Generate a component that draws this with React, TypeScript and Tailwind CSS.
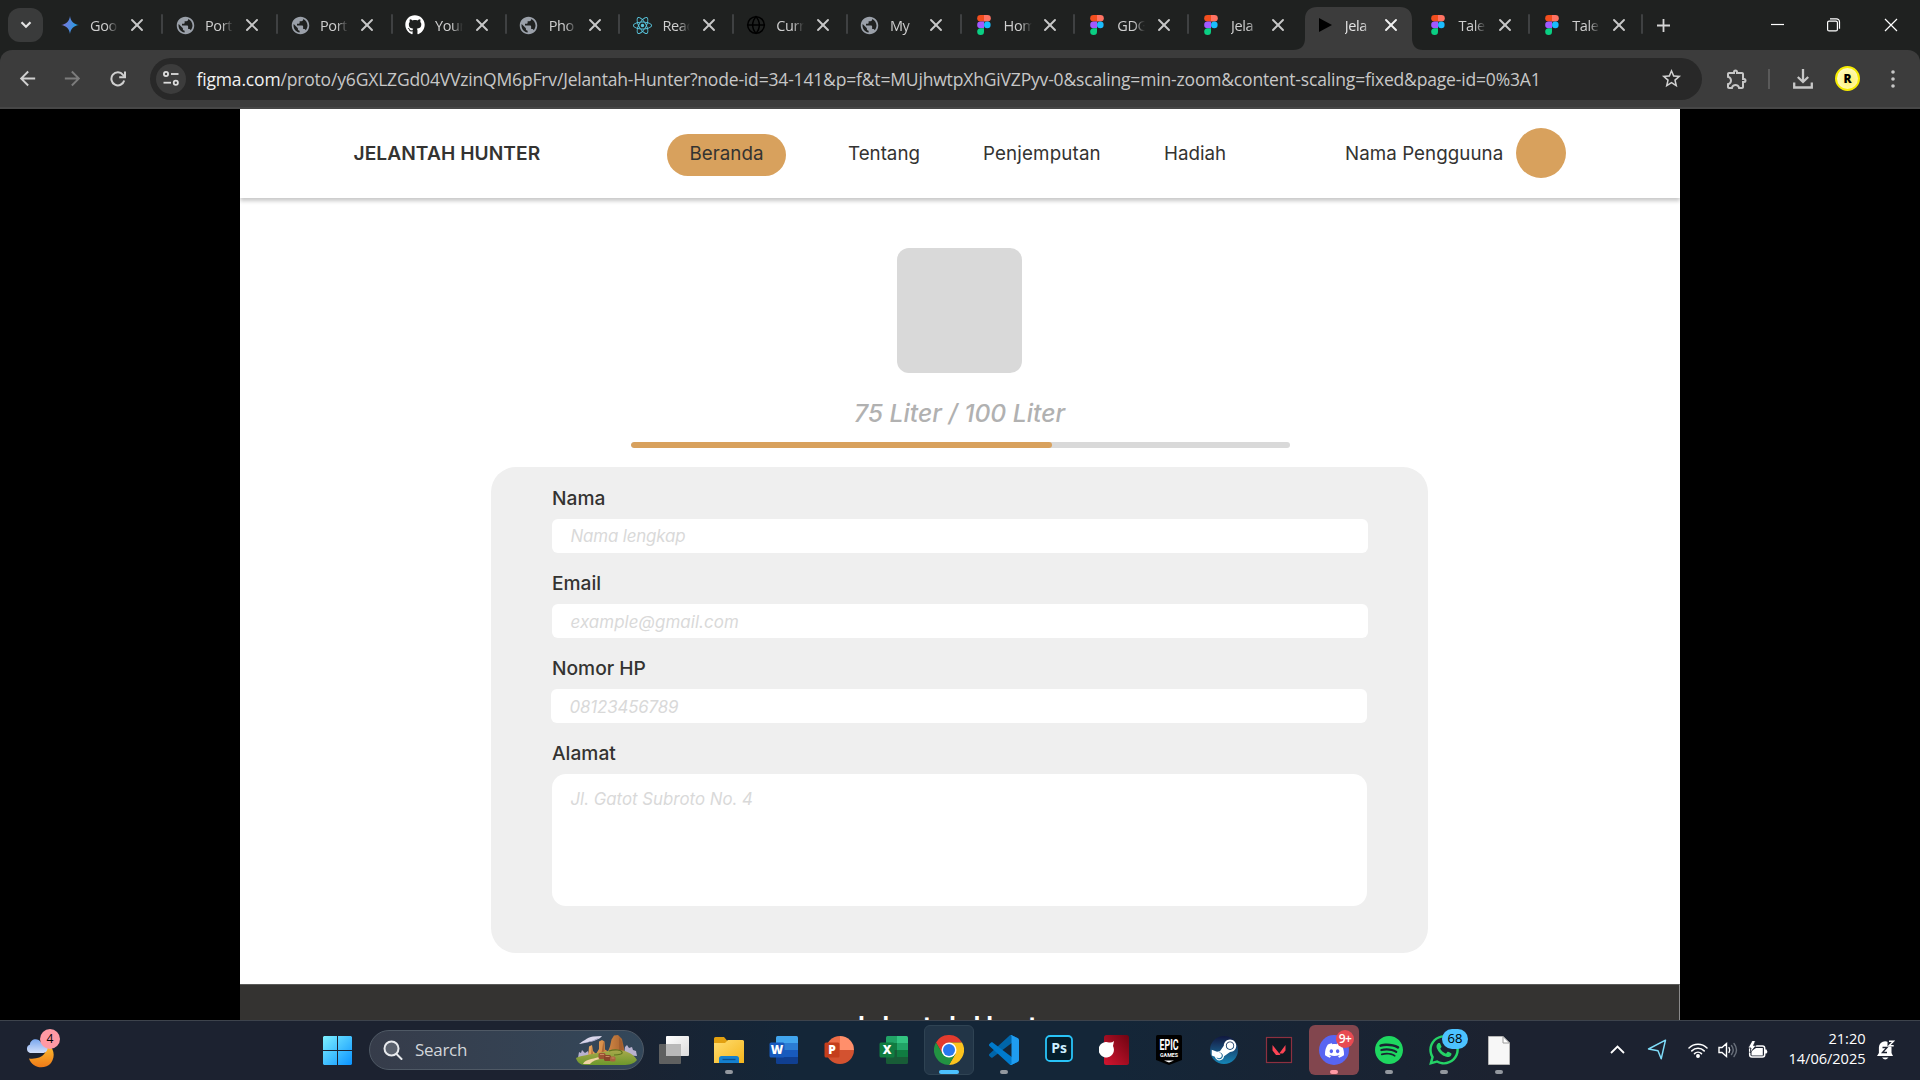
import React from "react";
import { MdArrowBack, MdArrowForward, MdOutlineExtension, MdPublic, MdStarOutline } from "react-icons/md";
import { FaGithub, FaWhatsapp, FaSteamSymbol } from "react-icons/fa";
import { SiReact, SiDiscord, SiSpotify } from "react-icons/si";
import { Globe, X } from "lucide-react";

/* ---------- favicons ---------- */

function FigmaMark() {
  return (
    <svg width="14" height="20" viewBox="0 0 14 20">
      <path d="M3.5 0H7v6.6H3.5a3.3 3.3 0 0 1 0-6.6z" fill="#f24e1e" />
      <path d="M7 0h3.5a3.3 3.3 0 0 1 0 6.6H7z" fill="#ff7262" />
      <path d="M3.5 6.6H7v6.6H3.5a3.3 3.3 0 0 1 0-6.6z" fill="#a259ff" />
      <circle cx="10.3" cy="9.9" r="3.3" fill="#1abcfe" />
      <path d="M3.5 13.2H7v3.3a3.4 3.4 0 1 1-3.5-3.3z" fill="#0acf83" />
    </svg>
  );
}

function Sparkle() {
  return (
    <svg width="18" height="18" viewBox="0 0 18 18">
      <defs>
        <linearGradient id="spark" x1="0" y1="0" x2="1" y2="0.2">
          <stop offset="0" stopColor="#8a6fd0" />
          <stop offset="0.5" stopColor="#5a86e0" />
          <stop offset="1" stopColor="#1ba1e3" />
        </linearGradient>
      </defs>
      <path d="M9 0c.5 5 4 8.500 9 9-5 .5-8.500 4-9 9-.5-5-4-8.500-9-9 5-.5 8.500-4 9-9z" fill="url(#spark)" />
    </svg>
  );
}

function PlayMark() {
  return (
    <svg width="18" height="18" viewBox="0 0 18 18">
      <path d="M3 2l13 7-13 7z" fill="#000" />
    </svg>
  );
}

const chromeGlobe = <MdPublic size={21} color="#9aa0a9" />;

type Tab = { label: string; icon: React.ReactNode; wide?: boolean; active?: boolean; sep?: boolean };

const tabs: Tab[] = [
  { label: "Goo", icon: <Sparkle />, wide: true },
  { label: "Port", icon: chromeGlobe, wide: true, sep: true },
  { label: "Port", icon: chromeGlobe, wide: true, sep: true },
  { label: "Your", icon: <FaGithub size={20} color="#fff" />, sep: true },
  { label: "Pho", icon: chromeGlobe, sep: true },
  { label: "Reac", icon: <SiReact size={19} color="#58c4dc" />, sep: true },
  { label: "Curr", icon: <Globe size={20} color="#000" strokeWidth={1.8} />, sep: true },
  { label: "My", icon: chromeGlobe, sep: true },
  { label: "Hom", icon: <FigmaMark />, sep: true },
  { label: "GDG", icon: <FigmaMark />, sep: true },
  { label: "Jela", icon: <FigmaMark />, sep: true },
  { label: "Jela", icon: <PlayMark />, active: true },
  { label: "Tale", icon: <FigmaMark /> },
  { label: "Tale", icon: <FigmaMark />, sep: true },
];

function TabItem({ tab }: { tab: Tab }) {
  return (
    <div className={`relative flex h-[50px] items-center ${tab.wide ? "w-[115px]" : "w-[113.730px]"}`}>
      {tab.active && (
        <svg className="absolute -left-2 bottom-0" width="130" height="43" viewBox="0 0 130 43">
          <path d="M0 43c8 0 12-4 12-12V12C12 4 17 0 24 0h83c7 0 12 4 12 12v19c0 8 4 12 11 12z" fill="#3c3c3c" />
        </svg>
      )}
      {tab.sep && <div className="absolute left-0 top-[14px] h-5 w-[2px] rounded bg-[#3f4142]" />}
      <div className="relative ml-[13px] flex w-[22px] justify-center">{tab.icon}</div>
      <div
        className={`relative ml-[9px] w-[28px] overflow-hidden whitespace-nowrap pt-px text-[14.500px] leading-5 tracking-[-0.400px] [mask-image:linear-gradient(to_right,black_60%,transparent)] ${
          tab.active ? "text-[#e3e3e3]" : "text-[#cfcfcf]"
        }`}
      >
        {tab.label}
      </div>
      <X className="relative ml-[8.500px]" size={20} strokeWidth={2.3} color={tab.active ? "#f0f0f0" : "#c7c7c7"} />
    </div>
  );
}

function TabStrip() {
  return (
    <div className="flex h-[50px] bg-[#1f2120]">
      <div className="mt-[8px] ml-[8px] mr-[3px] flex h-[34px] w-[35px] items-center justify-center rounded-xl bg-[#3a3b3b]">
        <svg width="12" height="8" viewBox="0 0 12 8" fill="none" stroke="#e3e3e3" strokeWidth="2.2">
          <path d="M1.500 1.200L6 5.700l4.500-4.500" />
        </svg>
      </div>
      {tabs.map((t, i) => (
        <TabItem key={i} tab={t} />
      ))}
      <div className="relative w-[42px]">
        <div className="absolute left-[-1px] top-[14px] h-5 w-[2px] rounded bg-[#3f4142]" />
        <svg className="mt-[19px] ml-[15px]" width="13" height="13" viewBox="0 0 13 13" stroke="#d5d5d5" strokeWidth="1.800">
          <path d="M6.500 0v13M0 6.500h13" />
        </svg>
      </div>
      <div className="ml-auto flex h-[50px] items-center pr-[22px]">
        <svg width="127" height="14" viewBox="0 0 127 14" fill="none" stroke="#fff" strokeWidth="1.200">
          <path d="M0 6.500h13" />
          <rect x="56.600" y="3.100" width="9.800" height="9.800" rx="1.500" />
          <path d="M59 .8h6.500a3 3 0 0 1 3 3v7" />
          <path d="M114 1l12 12M126 1l-12 12" />
        </svg>
      </div>
    </div>
  );
}

/* ---------- toolbar ---------- */

function Cell({ children }: { children: React.ReactNode }) {
  return <div className="flex w-[45px] justify-center">{children}</div>;
}

function Toolbar() {
  return (
    <div className="h-[59px] bg-[#1f2120]">
      <div className="flex h-[59px] items-center rounded-t-xl border-b-2 border-[#474747] bg-[#3c3c3c] pl-[5px]">
        <Cell><MdArrowBack size={23} color="#d0d0d0" /></Cell>
        <Cell><MdArrowForward size={23} color="#7c7c7c" /></Cell>
        <Cell>
          <svg width="16" height="16" viewBox="0 0 16 16" fill="none" stroke="#d0d0d0" strokeWidth="2">
            <path d="M14.200 9.500A6.500 6.500 0 1 1 13 3.800l1.800 2" />
            <path d="M15 .5v5.800H9.200" />
          </svg>
        </Cell>
        <div className="ml-[10px] flex h-[42px] w-[1552px] items-center rounded-full bg-[#282828] pl-[6px] pr-[19px]">
          <div className="flex size-[30px] items-center justify-center rounded-full bg-[#3c3c3c]">
            <svg width="16" height="15" viewBox="0 0 16 15" fill="none" stroke="#dcdcdc" strokeWidth="1.800">
              <circle cx="3" cy="3" r="2.100" />
              <path d="M8 3h7.500" />
              <circle cx="12.800" cy="11.700" r="2.100" />
              <path d="M.5 11.700H8" />
            </svg>
          </div>
          <div className="ml-[10.500px] whitespace-nowrap pt-px text-[17.500px] leading-6 tracking-[-0.170px] text-[#c7c7c7]">
            <span className="text-[#f1f1f1]">figma.com</span>
            /proto/y6GXLZGd04VVzinQM6pFrv/Jelantah-Hunter?node-id=34-141&amp;p=f&amp;t=MUjhwtpXhGiVZPyv-0&amp;scaling=min-zoom&amp;content-scaling=fixed&amp;page-id=0%3A1
          </div>
          <MdStarOutline className="ml-auto" size={23} color="#d0d0d0" />
        </div>
        <div className="ml-[12px]"><Cell><MdOutlineExtension size={24} color="#c7c7c7" /></Cell></div>
        <div className="mr-[10px] ml-[9px] h-5 w-[2px] bg-[#5a5a5a]" />
        <Cell>
          <svg width="20" height="20" viewBox="0 0 20 20" fill="none" stroke="#c7c7c7" strokeWidth="2.300">
            <path d="M10 0v13M4.800 8L10 13l5.200-5M1.200 13.500V18.500h17.600V13.500" />
          </svg>
        </Cell>
        <Cell>
          <div className="flex size-[25px] items-center justify-center rounded-full border-2 border-[#f7ec00] bg-[radial-gradient(circle_at_60%_60%,#fff36b,#fffde0)] text-[12px] font-extrabold text-black">R</div>
        </Cell>
        <Cell>
          <svg width="4" height="18" viewBox="0 0 4 18" fill="#c7c7c7">
            <circle cx="2" cy="2" r="1.800" /><circle cx="2" cy="9" r="1.800" /><circle cx="2" cy="16" r="1.800" />
          </svg>
        </Cell>
      </div>
    </div>
  );
}

/* ---------- web page ---------- */

function Navbar() {
  return (
    <nav className="relative flex h-[89px] shrink-0 items-center bg-white pb-px text-[18.750px] leading-6 text-[#343331] shadow-[0_3px_4px_rgba(0,0,0,0.22)]">
      <div className="ml-[113.500px] w-[313.500px] text-[19.200px] font-semibold tracking-[0.050px]">JELANTAH HUNTER</div>
      <div className="flex h-[42px] mt-[3px] w-[119px] items-center justify-center rounded-[21px] bg-[#d8a15d] pb-px">Beranda</div>
      <div className="ml-[62px] w-[135px] pt-[2px]">Tentang</div>
      <div className="w-[181px] pt-[2px] tracking-[0.150px]">Penjemputan</div>
      <div className="w-[181px] pt-[2px]">Hadiah</div>
      <div className="w-[171px] pt-[2px] tracking-[0.050px]">Nama Pengguuna</div>
      <div className="size-[50px] rounded-full bg-[#d8a15d]" />
    </nav>
  );
}

const label = "h-[30px] text-[19.200px] font-medium leading-[29px] text-[#343331]";
const field = "mt-[5px] mb-4 flex h-[34px] w-[816px] items-center rounded-md bg-white pl-[18.500px] text-[16.900px] italic text-[#d9d9d9]";

function ProfileForm() {
  return (
    <div className="mt-[19px] h-[486px] w-[937px] rounded-[25px] bg-[#efefef] pt-[17px] pl-[61px]">
      <div className={label}>Nama</div>
      <div className={`${field} pt-px tracking-[-0.150px]`}>Nama lengkap</div>
      <div className={label}>Email</div>
      <div className={`${field} pt-[3px] tracking-[0.080px]`}>example@gmail.com</div>
      <div className={label}>Nomor HP</div>
      <div className={`${field} -ml-px pt-[3px] tracking-[-0.150px]`}>08123456789</div>
      <div className={label}>Alamat</div>
      <div className="mt-[5px] h-[132px] w-[815px] rounded-[14px] bg-white pt-[13px] pl-[18.500px] text-[16.800px] italic leading-6 tracking-[0.020px] text-[#d9d9d9]">
        Jl. Gatot Subroto No. 4
      </div>
    </div>
  );
}

function Page() {
  return (
    <div className="flex h-[911px] justify-center bg-black">
      <div className="flex w-[1440px] flex-col overflow-hidden bg-white font-['Inter',sans-serif]">
        <Navbar />
        <main className="flex h-[786px] flex-col items-center pt-[50px] pr-px">
          <div className="size-[125px] rounded-xl bg-[#d9d9d9]" />
          <div className="mt-5 h-10 text-[24.700px] font-medium italic leading-10 text-[#b1b1b1]">75 Liter / 100 Liter</div>
          <div className="mt-[9px] ml-[2px] h-[6px] w-[659px] overflow-hidden rounded-full bg-[#d9d9d9]">
            <div className="h-full w-[421px] rounded-full bg-[#d8a15d]" />
          </div>
          <ProfileForm />
        </main>
        <footer className="h-9 border-t border-r border-t-[#5a5a58] border-r-[#8a8a8a] bg-[#343331] pt-[27px] pr-1 text-center text-[27px] font-semibold leading-[30px] tracking-[0.500px] text-white">
          Jelantah Hunter
        </footer>
      </div>
    </div>
  );
}

/* ---------- taskbar ---------- */

function Weather() {
  return (
    <div className="relative ml-[26px] mt-[12px] h-[44px] w-[284px]">
      <svg width="36" height="44" viewBox="0 0 36 44">
        <defs>
          <linearGradient id="moon" x1="0" y1="0" x2="0" y2="1">
            <stop offset="0" stopColor="#ffc531" /><stop offset="1" stopColor="#ee7a18" />
          </linearGradient>
          <linearGradient id="cloud" x1="0" y1="0" x2="0" y2="1">
            <stop offset="0" stopColor="#7aa7ee" /><stop offset="1" stopColor="#d3e0fb" />
          </linearGradient>
        </defs>
        <path d="M20 10c3 9-4 17-17 15.500 3 10 16 11.500 22 4.500 5-7 3-16-5-20z" fill="url(#moon)" />
        <path d="M4 20a4.500 4.500 0 0 1 0-8.500c0-5.500 8-7.500 11-2 6-1 8 4 6 8-1 2-3 2.500-5 2.500z" fill="url(#cloud)" />
      </svg>
      <div className="absolute left-[14px] top-[-4px] flex size-5 items-center justify-center rounded-full bg-[#ff99a4] text-[12px] text-black">4</div>
    </div>
  );
}

function WindowsLogo() {
  return (
    <svg width="29" height="29" viewBox="0 0 29 29">
      <defs>
        <linearGradient id="win" gradientUnits="userSpaceOnUse" x1="0" y1="0" x2="29" y2="29">
          <stop offset="0" stopColor="#7df0ff" /><stop offset="1" stopColor="#0a93ff" />
        </linearGradient>
      </defs>
      <path d="M1 0h13v14H0V1zM15 0h13l1 1v13H15zM0 15h14v14H1l-1-1zM15 15h14v13l-1 1H15z" fill="url(#win)" />
    </svg>
  );
}

function SearchArt() {
  return (
    <svg width="62" height="32" viewBox="0 0 62 32">
      <defs>
        <linearGradient id="rock" x1="0" y1="0" x2="1" y2="0">
          <stop offset="0" stopColor="#e9a862" /><stop offset="0.5" stopColor="#d58a45" /><stop offset="1" stopColor="#a4602f" />
        </linearGradient>
        <linearGradient id="grass" x1="0" y1="0" x2="0" y2="1">
          <stop offset="0" stopColor="#a9a94b" /><stop offset="1" stopColor="#6c982c" />
        </linearGradient>
      </defs>
      <path d="M3 10c2-1 3-3 6-4 2-2 5-3 8-3.500L26 2c-1 2-4 3-6 4-3 2-6 1-9 2.500-3 .5-5 1-8 1.500z" fill="#d9d6ea" />
      <path d="M5 9.500c4-1.500 8-1 12-3l6-3c-3 3-6 3.500-9 4.500z" fill="#8f8fb8" />
      <path d="M2 24l1-6 2 1 1-3 3 3 3-2 2 7z" fill="#b9b2cf" />
      <path d="M48 21l1-8 2-2 2 3 3-1 1 3 3 1 1 5z" fill="#b9b2cf" />
      <path d="M11 25l1.500-6 .5-6.500 3-1.500 1 6 3 3 3-5V7.500L26 6l2.500 1.500.5 8 3 2 2-5 1.500-7L38 1.500 42 1l4 4 2 9 1 9z" fill="url(#rock)" />
      <path d="M16 12l1 9-2 1zM27.500 7l1 10-3 2zM43 3l3 5 1 10-4-1z" fill="#9c5a2e" opacity="0.700" />
      <path d="M0 24c6-3 13-3 20-5 8 0 12-3 20-3 9 0 17 3 21 10-3 4-8 5-14 5H9c-5 0-8-3-9-7z" fill="url(#grass)" />
      <path d="M33 17c6-2 12-1 13 1s-3 3-8 3" fill="none" stroke="#5f7420" strokeWidth="1.200" />
      <path d="M7 30c1-4 9-5 16-7l1 2c-6 1-8 3-10 5z" fill="#f0d3a3" />
      <rect x="22.500" y="19" width="7" height="6" rx="1.500" fill="#9c5433" />
      <rect x="28" y="21" width="7" height="6" rx="1.500" fill="#8a4529" />
      <rect x="34" y="22.500" width="5.500" height="5" rx="1.500" fill="#a9623d" />
      <path d="M24 20.500h4M29.500 22.500h4M35.500 24h3" stroke="#c98a63" strokeWidth="1" />
    </svg>
  );
}

function SearchBox() {
  return (
    <div className="ml-1 flex h-[40px] w-[275px] items-center rounded-full border border-[#4f5965] bg-gradient-to-r from-[#363c4a] to-[#33475a] pl-[13px] pr-[5px]">
      <svg width="20" height="20" viewBox="0 0 20 20" fill="none" stroke="#e8eaed" strokeWidth="2" strokeLinecap="round">
        <circle cx="8.500" cy="8.500" r="7" fill="#5a616d" /><path d="M13.500 14l5 5" />
      </svg>
      <div className="ml-[12px] text-[17px] leading-6 tracking-[-0.300px] text-[#d3d6da]">Search</div>
      <div className="ml-auto"><SearchArt /></div>
    </div>
  );
}

function OfficeTile({ letter, dark, children }: { letter: string; dark: string; children: React.ReactNode }) {
  return (
    <svg width="30" height="30" viewBox="0 0 30 30">
      {children}
      <rect x="0.500" y="7.500" width="15" height="15" rx="1.500" fill={dark} />
      <text x="8" y="19.200" textAnchor="middle" fontSize="12" fontWeight="800" fill="#fff" fontFamily="Open Sans">{letter}</text>
    </svg>
  );
}

type App = { icon: React.ReactNode; run?: "idle" | "active" | "alert"; badge?: React.ReactNode };

const apps: App[] = [
  {
    icon: (
      <svg width="30" height="30" viewBox="0 0 30 30">
        <defs>
          <linearGradient id="tv" x1="0" y1="0" x2="1" y2="1"><stop offset="0" stopColor="#fff" /><stop offset="1" stopColor="#dcdcdc" /></linearGradient>
        </defs>
        <rect x="7" y="1" width="23" height="20" rx="1" fill="url(#tv)" />
        <rect x="0" y="9" width="22" height="20" rx="1" fill="#5f6060" />
        <rect x="7" y="9" width="15" height="12" fill="#b9b9b9" />
      </svg>
    ),
  },
  {
    run: "idle",
    icon: (
      <svg width="30" height="30" viewBox="0 0 30 30">
        <defs>
          <linearGradient id="fold" x1="0" y1="0" x2="1" y2="1"><stop offset="0" stopColor="#ffdd70" /><stop offset="1" stopColor="#f5b51c" /></linearGradient>
        </defs>
        <path d="M0 3.500Q0 2 1.500 2H10l3 3.500H28.500Q30 5.500 30 7v8H0z" fill="#e2a010" />
        <path d="M0 8h11l3-3h14.500Q30 5 30 6.500V28H0z" fill="url(#fold)" />
        <path d="M5 28v-4.500Q5 21 7.500 21h15Q25 21 25 23.500V28z" fill="#1480cf" />
        <path d="M8.500 24.500h13" stroke="#0a4f8e" strokeWidth="1.300" />
      </svg>
    ),
  },
  {
    icon: (
      <OfficeTile letter="W" dark="#185abd">
        <path d="M7 8V2.500Q7 1 8.500 1h19Q29 1 29 2.500V8z" fill="#41a5ee" /><path d="M7 8h22v7H7z" fill="#2b7cd3" />
        <path d="M7 15h22v7H7z" fill="#185abd" /><path d="M7 22h22v5.500Q29 29 27.500 29h-19Q7 29 7 27.500z" fill="#103f91" />
      </OfficeTile>
    ),
  },
  {
    icon: (
      <OfficeTile letter="P" dark="#c43e1c">
        <path d="M16 15H2A14 14 0 0 1 16 1z" fill="#ed6c47" /><path d="M16 1a14 14 0 0 1 14 14H16z" fill="#ff8f6b" />
        <path d="M2 15h28a14 14 0 0 1-28 0z" fill="#d35230" />
      </OfficeTile>
    ),
  },
  {
    icon: (
      <OfficeTile letter="X" dark="#107c41">
        <path d="M7 8V2.500Q7 1 8.500 1H18v7z" fill="#21a366" /><path d="M18 1h9.500Q29 1 29 2.500V8H18z" fill="#33c481" />
        <path d="M7 8h11v7H7z" fill="#107c41" /><path d="M18 8h11v7H18z" fill="#21a366" />
        <path d="M18 15h11v7H18z" fill="#107c41" /><path d="M7 15h11v7h11v5.500Q29 29 27.500 29h-19Q7 29 7 27.500z" fill="#185c37" />
      </OfficeTile>
    ),
  },
  {
    run: "active",
    icon: (
      <svg width="30" height="30" viewBox="0 0 48 48">
        <path d="M24 12h20.800A24 24 0 0 0 3.200 12l10.400 18z" fill="#e33b2e" />
        <path d="M34.400 30L24 48a24 24 0 0 0 20.800-36H24z" fill="#fcc31e" />
        <path d="M13.600 30L3.200 12A24 24 0 0 0 24 48l10.400-18z" fill="#229342" />
        <circle cx="24" cy="24" r="12" fill="#fff" /><circle cx="24" cy="24" r="9.600" fill="#2878ee" />
      </svg>
    ),
  },
  {
    run: "idle",
    icon: (
      <svg width="30" height="30" viewBox="0 0 100 100">
        <path d="M96.460 10.800L75.860.88C73.470-.27 70.620.21 68.750 2.080L1.300 63.580c-1.810 1.660-1.810 4.510 0 6.160l5.510 5.010c1.490 1.350 3.720 1.450 5.320.24L93.360 13.370C96.090 11.300 100 13.250 100 16.670v-.24c0-2.400-1.380-4.590-3.540-5.630z" fill="#0065a9" />
        <path d="M96.460 89.200L75.860 99.120c-2.390 1.150-5.240.67-7.110-1.200L1.300 36.420c-1.810-1.660-1.810-4.510 0-6.170l5.510-5c1.490-1.350 3.720-1.450 5.320-.24l81.230 61.620c2.730 2.070 6.640.12 6.640-3.300v.24c0 2.400-1.380 4.590-3.540 5.630z" fill="#007acc" />
        <path d="M75.860 99.130c-2.390 1.140-5.240.66-7.110-1.210C71.060 100.220 75 98.590 75 95.330V4.670C75 1.410 71.060-.22 68.750 2.080c1.870-1.870 4.720-2.350 7.110-1.210l20.600 9.910c2.160 1.040 3.540 3.230 3.540 5.630v67.180c0 2.400-1.380 4.590-3.540 5.630z" fill="#1f9cf0" />
      </svg>
    ),
  },
  {
    icon: (
      <svg className="mb-[3px]" width="28" height="27" viewBox="0 0 28 27">
        <rect x="1" y="1" width="26" height="25" rx="4" fill="#041e2c" stroke="#29c4f8" strokeWidth="1.800" />
        <text x="14" y="18" textAnchor="middle" fontSize="14" fontWeight="700" fill="#cdeeff" fontFamily="Open Sans">Ps</text>
      </svg>
    ),
  },
  {
    icon: (
      <svg width="30" height="30" viewBox="0 0 30 30">
        <defs>
          <linearGradient id="red" x1="1" y1="0" x2="0" y2="1"><stop offset="0" stopColor="#6e0412" /><stop offset="1" stopColor="#d41530" /></linearGradient>
        </defs>
        <rect x="5" y="0" width="25" height="30" rx="2.500" fill="url(#red)" />
        <path d="M15 6l-1 5a7.700 7.700 0 1 1-4-3.500q3 .5 5-1.500z" fill="#fff" />
      </svg>
    ),
  },
  {
    icon: (
      <svg width="30" height="30" viewBox="0 0 30 30">
        <path d="M2 1.500Q2 0 3.500 0h23Q28 0 28 1.500V25l-13 5-13-5z" fill="#000" />
        <text x="15" y="14.500" textAnchor="middle" fontSize="15" fontWeight="700" fill="#fff" fontFamily="Roboto" textLength="19" lengthAdjust="spacingAndGlyphs">EPIC</text>
        <text x="15" y="22" textAnchor="middle" fontSize="5.500" fontWeight="700" fill="#fff" fontFamily="Roboto" textLength="18" lengthAdjust="spacingAndGlyphs">GAMES</text>
        <path d="M10 25.500h10l-5 2z" fill="#fff" />
      </svg>
    ),
  },
  {
    icon: (
      <div className="relative flex size-7 items-center justify-center overflow-hidden rounded-full bg-gradient-to-b from-[#10183f] to-[#1387b8]">
        <FaSteamSymbol size={28} color="#fff" />
      </div>
    ),
  },
  {
    icon: (
      <svg width="28" height="28" viewBox="0 0 28 28">
        <rect x="1.500" y="1.500" width="25" height="25" fill="#0f1923" stroke="#8d3040" strokeWidth="1.200" />
        <path d="M7.500 9l8 10h-4.500l-3.500-4.500zM20.500 9v5.500L18 17.500h-3.800z" fill="#fa4454" />
      </svg>
    ),
  },
  {
    run: "alert",
    icon: (
      <div className="flex size-[30px] items-center justify-center rounded-full bg-[#5865f2]"><SiDiscord size={19} color="#fff" /></div>
    ),
    badge: <div className="absolute left-[27px] top-[5px] flex size-[18px] items-center justify-center rounded-full bg-[#e84a52] text-[12px] font-semibold tracking-[-0.500px] text-white">9+</div>,
  },
  { run: "idle", icon: <SiSpotify size={28} color="#1ed760" /> },
  {
    run: "idle",
    icon: <FaWhatsapp size={34} color="#25d366" />,
    badge: <div className="absolute left-[23px] top-[4px] flex h-5 w-[26px] items-center justify-center rounded-full bg-[#4cc2ff] text-[13px] text-black">68</div>,
  },
  {
    run: "idle",
    icon: (
      <svg width="22" height="29" viewBox="0 0 22 29">
        <path d="M.5.500H15L21.500 7v21.500H.5z" fill="#f7f7f7" stroke="#b5b5b5" />
        <path d="M15 .5V7h6.500z" fill="#fff" stroke="#9a9a9a" />
      </svg>
    ),
  },
];

function AppButton({ app }: { app: App }) {
  return (
    <div className="flex w-[55px] shrink-0 justify-center">
      <div
        className={`relative flex size-[50px] items-center justify-center rounded-md ${
          app.run === "active" ? "border border-[#2f4353] bg-[#223547]" : app.run === "alert" ? "bg-[#82464e]" : ""
        }`}
      >
        {app.icon}
        {app.badge}
        {app.run === "idle" && <div className="absolute bottom-[1px] h-[4px] w-[8px] rounded-full bg-[#93989f]" />}
        {app.run === "active" && <div className="absolute bottom-0 h-[4px] w-5 rounded-full bg-[#4cc2ff]" />}
        {app.run === "alert" && <div className="absolute bottom-[1px] h-[4px] w-[8px] rounded-full bg-[#ff99a4]" />}
      </div>
    </div>
  );
}

function Tray() {
  return (
    <div className="ml-[71px] flex items-center pb-px">
      <div className="flex w-10 justify-center">
        <svg width="15" height="9" viewBox="0 0 15 9" fill="none" stroke="#fff" strokeWidth="1.800"><path d="M1 8l6.500-6.500L14 8" /></svg>
      </div>
      <div className="flex w-[38px] justify-center">
        <svg width="20" height="21" viewBox="0 0 20 21" fill="none" stroke="#7fdcf8" strokeWidth="1.500" strokeLinejoin="round">
          <path d="M18.500 1.200L1.500 10l9.500 1.800 3.200 8z" />
        </svg>
      </div>
      <div className="ml-[7px] flex w-[30px] justify-center">
        <svg width="20" height="16" viewBox="0 0 20 16" fill="none" stroke="#fff" strokeWidth="1.500" strokeLinecap="round">
          <path d="M1 6a12.800 12.800 0 0 1 18 0M3.800 8.900a8.800 8.800 0 0 1 12.400 0M6.500 11.600a5 5 0 0 1 7 0" />
          <circle cx="10" cy="14" r="1.200" fill="#fff" />
        </svg>
      </div>
      <div className="flex w-[30px] justify-center">
        <svg width="20" height="18" viewBox="0 0 20 18" fill="none" stroke="#fff" strokeWidth="1.400" strokeLinecap="round">
          <path d="M1 6.500v5h3l4.500 4V2.500L4 6.500zM11 6.500q1.500 2.500 0 5" />
          <path d="M13.500 4.500q3.500 4.500 0 9M16 2.500q5 6.500 0 13" stroke="#69707b" />
        </svg>
      </div>
      <div className="flex w-[30px] justify-center">
        <svg width="20" height="18" viewBox="0 0 20 18">
          <rect x="1.700" y="5" width="15" height="11" rx="2.200" fill="none" stroke="#fff" strokeWidth="1.500" />
          <path d="M3.500 14.500V10L8 7h6.800v7.500z" fill="#fff" />
          <path d="M17 8.500h1.500q1.500 2 0 4H17z" fill="#fff" />
          <path d="M4.500 -1L0 7h3L2 12l6-7.500H5.500L7.500 0z" fill="#fff" stroke="#1c2230" strokeWidth=".8" />
        </svg>
      </div>
      <div className="-mt-[3px] w-[93px] text-right text-[14.600px] leading-5 tracking-[-0.050px] text-white">
        <div>21:20</div>
        <div>14/06/2025</div>
      </div>
      <svg className="ml-[11px]" width="18" height="20" viewBox="0 0 18 20">
        <path d="M0 16h16l-1.500-3V7.500a6.300 6.300 0 0 0-12.600 0V13z" fill="#fff" />
        <path d="M5 17.500h6.500q-3.200 4-6.500 0z" fill="#fff" />
        <path d="M10.500 0H18v6.500h-7.500z" fill="#1c2230" />
        <path d="M5.500 7.500h4.500l-4.500 5h4.500" fill="none" stroke="#1c2230" strokeWidth="1.400" />
        <path d="M12 1.200h4.500L12 5.700h4.700" fill="none" stroke="#fff" strokeWidth="1.400" />
      </svg>
    </div>
  );
}

function Taskbar() {
  return (
    <div className="flex h-[60px] items-center border-t border-[#3d434c] bg-[linear-gradient(to_right,#1c2230_0%,#1c2230_30%,#142638_41%,#142638_58%,#1c2230_78%,#1c2230_100%)] pb-px">
      <div className="h-full w-[310px] shrink-0"><Weather /></div>
      <div className="flex w-[55px] shrink-0 justify-center"><WindowsLogo /></div>
      <SearchBox />
      <div className="ml-[2.500px] flex">
        {apps.map((a, i) => (
          <AppButton key={i} app={a} />
        ))}
      </div>
      <Tray />
    </div>
  );
}

export default function App() {
  return (
    <div className="flex h-[1080px] w-[1920px] flex-col overflow-hidden bg-black font-['Open_Sans','Noto_Sans',sans-serif]">
      <TabStrip />
      <Toolbar />
      <Page />
      <Taskbar />
    </div>
  );
}
